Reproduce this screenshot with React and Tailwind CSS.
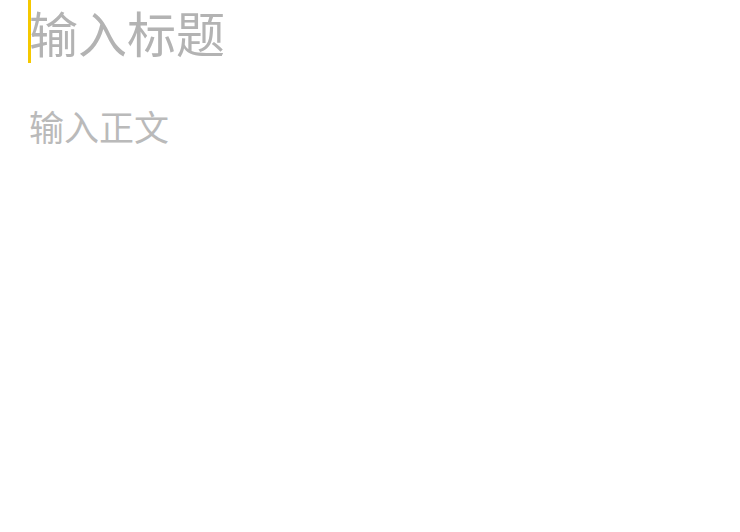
const App = () => {
  return (
    <div
      className="w-[740px] h-[532px] bg-white pl-[28px]"
      style={{ fontFamily: '"Noto Sans CJK SC", "Noto Sans", sans-serif' }}
    >
      {/* Title field with caret */}
      <div className="relative pl-[1px]">
        <span className="absolute left-0 top-0 h-[63px] w-[3px] bg-[#f5c800]" />
        <div className="text-[49px] leading-[63px] text-[#b3b3b3]">输入标题</div>
      </div>

      {/* Body field */}
      <div className="mt-[44px] text-[35px] leading-[38px] text-[#bababa] pl-[1px]">输入正文</div>
    </div>
  );
};

export default App;
